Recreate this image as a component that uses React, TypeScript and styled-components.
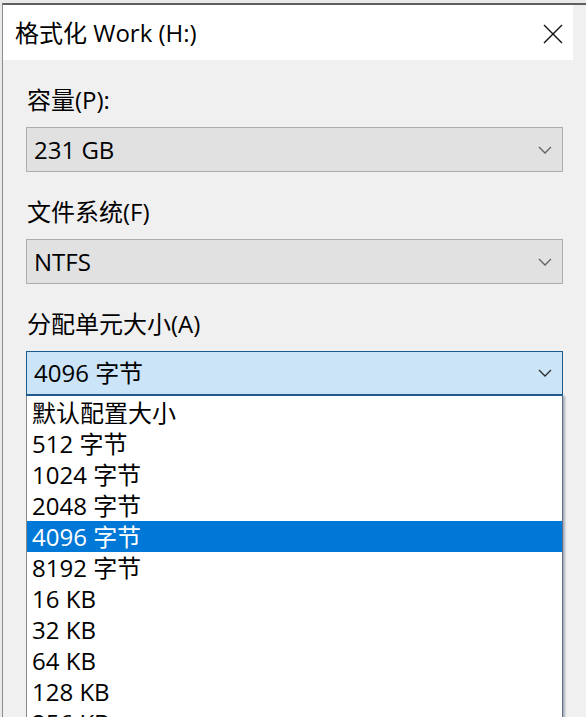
import React from 'react';
import styled, { createGlobalStyle } from 'styled-components';

const GlobalStyle = createGlobalStyle`
	html, body {
		margin: 0;
		padding: 0;
		background: #e9e9e9;
		overflow: hidden;
	}
	body {
		font-family: 'Open Sans', 'Noto Sans CJK SC', sans-serif;
		color: #000;
	}
`;

const sizes = [
	'默认配置大小',
	'512 字节',
	'1024 字节',
	'2048 字节',
	'4096 字节',
	'8192 字节',
	'16 KB',
	'32 KB',
	'64 KB',
	'128 KB',
	'256 KB',
];

const Chevron = ({ color }: { color: string }) => (
	<svg width="14" height="8" viewBox="0 0 14 8">
		<path d="M1 1 L7 7 L13 1" fill="none" stroke={color} strokeWidth="1.3" />
	</svg>
);

const CloseIcon = () => (
	<svg width="20" height="20" viewBox="0 0 20 20">
		<path d="M1 1 L19 19 M19 1 L1 19" stroke="#111" strokeWidth="1.4" />
	</svg>
);

const Combo = ({ value, open }: { value: string; open?: boolean }) => (
	<Box open={open}>
		<span>{value}</span>
		<Chevron color={open ? '#2b2b2b' : '#606060'} />
	</Box>
);

const App = () => {
	return (
		<>
			<GlobalStyle />
			<Window>
				<TitleBar>
					<Title>格式化 Work (H:)</Title>
					<CloseButton>
						<CloseIcon />
					</CloseButton>
				</TitleBar>
				<Content>
					<Field>
						<Label>容量(P):</Label>
						<Combo value="231 GB" />
					</Field>
					<Field>
						<Label>文件系统(F)</Label>
						<Combo value="NTFS" />
					</Field>
					<Field>
						<Label>分配单元大小(A)</Label>
						<Combo value="4096 字节" open />
						<List>
							{sizes.map((s) => (
								<Item key={s} selected={s === '4096 字节'}>
									{s}
								</Item>
							))}
						</List>
					</Field>
				</Content>
			</Window>
		</>
	);
};

const Window = styled.div`
	margin: 3px 0 0 2px;
	border-top: 2px solid #5f5f5f;
	border-left: 1px solid #8c8c8c;
	background: #f0f0f0;
	height: 720px;
	width: 620px;
`;

const TitleBar = styled.div`
	height: 55px;
	background: #fff;
	display: flex;
	align-items: center;
	justify-content: space-between;
	padding: 0 0 0 12px;
	width: 558px;
`;

const Title = styled.div`
	font-size: 24px;
	line-height: 30px;
	margin-top: 1px;
`;

const CloseButton = styled.div`
	display: flex;
	align-items: center;
	justify-content: center;
	width: 40px;
	height: 40px;
	margin-top: 2px;
`;

const Content = styled.div`
	padding: 25px 0 0 23px;
	display: flex;
	flex-direction: column;
	gap: 25px;
`;

const Field = styled.div`
	width: 537px;
	display: flex;
	flex-direction: column;
`;

const Label = styled.div`
	font-size: 24px;
	line-height: 30px;
	margin-bottom: 12px;
	padding-left: 1px;
`;

const Box = styled.div<{ open?: boolean }>`
	box-sizing: border-box;
	height: 45px;
	display: flex;
	align-items: center;
	justify-content: space-between;
	padding: 0 10px 0 7px;
	font-size: 24px;
	background: ${(p) => (p.open ? '#cce4f7' : '#e1e1e1')};
	border: 1px solid ${(p) => (p.open ? '#1d5a8c' : '#adadad')};
	border-bottom-width: ${(p) => (p.open ? '2px' : '1px')};

	span {
		line-height: 30px;
	}
`;

const List = styled.div`
	background: #fff;
	border-left: 1px solid #8a8a8a;
	border-right: 1px solid #5f6f86;
	box-shadow: 2px 0 2px rgba(70, 90, 120, 0.45);
	padding-top: 1px;
	display: flex;
	flex-direction: column;
`;

const Item = styled.div<{ selected?: boolean }>`
	height: 31px;
	line-height: 31px;
	font-size: 24px;
	padding-left: 5px;
	background: ${(p) => (p.selected ? '#0078d7' : 'transparent')};
	color: ${(p) => (p.selected ? '#fff' : '#000')};
`;

export default App;
